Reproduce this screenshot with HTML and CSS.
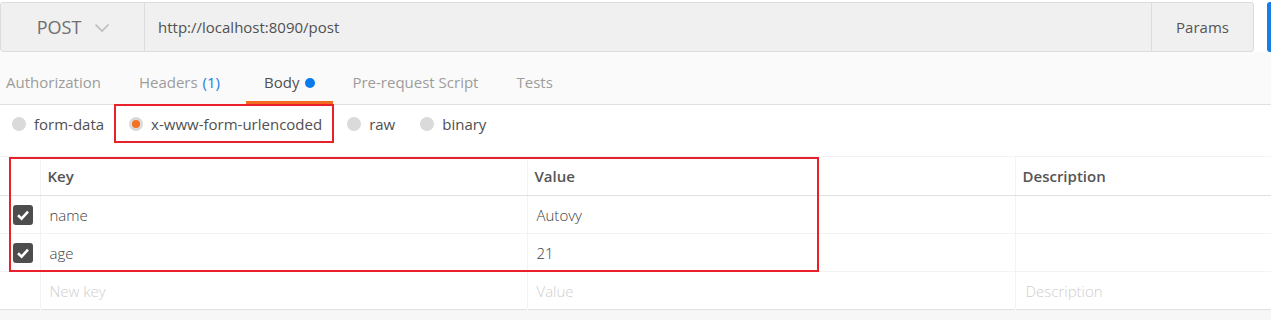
FILE: index.html
```html
<!DOCTYPE html>
<html lang="en">
<head>
    <meta charset="UTF-8">
    <title>POST</title>
    <link rel="stylesheet" href="styles.css">
</head>
<body>
<div class="topbar">
    <div class="request">
        <div class="method">
            <span>POST</span>
            <svg class="chev" width="16" height="10" viewBox="0 0 16 10"><path d="M1.5 1.5 L8 8 L14.5 1.5" fill="none" stroke="#bdbdbd" stroke-width="1.6"/></svg>
        </div>
        <div class="url">http://localhost:8090/post</div>
        <div class="params">Params</div>
    </div>
    <div class="send"></div>
</div>

<div class="tabs">
    <div class="tab first">Authorization</div>
    <div class="tab">Headers <span class="count">(1)</span></div>
    <div class="tab active">Body <span class="dot"></span></div>
    <div class="tab">Pre-request Script</div>
    <div class="tab">Tests</div>
</div>

<div class="bodytypes">
    <label class="opt"><span class="radio"></span>form-data</label>
    <label class="opt marked"><span class="radio on"></span>x-www-form-urlencoded</label>
    <label class="opt"><span class="radio"></span>raw</label>
    <label class="opt"><span class="radio"></span>binary</label>
</div>

<div class="tablewrap">
    <table class="kv" cellspacing="0">
        <colgroup>
            <col style="width: 40px">
            <col style="width: 487px">
            <col style="width: 488px">
            <col>
        </colgroup>
        <tr class="head">
            <td class="chk"></td>
            <td>Key</td>
            <td>Value</td>
            <td>Description</td>
        </tr>
        <tr class="row">
            <td class="chk"><span class="box"><svg width="20" height="20" viewBox="0 0 20 20"><path d="M5 10.2 L8.6 13.6 L15 6.6" fill="none" stroke="#fff" stroke-width="2.6"/></svg></span></td>
            <td>name</td>
            <td>Autovy</td>
            <td></td>
        </tr>
        <tr class="row">
            <td class="chk"><span class="box"><svg width="20" height="20" viewBox="0 0 20 20"><path d="M5 10.2 L8.6 13.6 L15 6.6" fill="none" stroke="#fff" stroke-width="2.6"/></svg></span></td>
            <td>age</td>
            <td>21</td>
            <td></td>
        </tr>
        <tr class="row new">
            <td class="chk"></td>
            <td>New key</td>
            <td>Value</td>
            <td class="descph">Description</td>
        </tr>
    </table>
    <div class="mark"></div>
</div>
<div class="footer"></div>
</body>
</html>
```

FILE: styles.css
```css
body {
    margin: 0;
    font-family: "Open Sans", "Liberation Sans", sans-serif;
    font-size: 15px;
    color: #505050;
    background: #ffffff;
    overflow: hidden;
}

.topbar {
    display: flex;
    padding-top: 2px;
    height: 50px;
}

.request {
    flex-shrink: 0;
    width: 1252px;
    display: flex;
    background: #f0f0f0;
    border: 1px solid #dcdcdc;
    border-radius: 3px;
}

.method {
    width: 144px;
    border-right: 1px solid #dcdcdc;
    display: flex;
    align-items: center;
    justify-content: center;
    gap: 13px;
    font-size: 18px;
    color: #6e6e6e;
    padding-left: 2px;
    box-sizing: border-box;
}

.chev {
    margin-top: 1px;
}

.url {
    flex: 1;
    display: flex;
    align-items: center;
    padding-left: 13px;
    color: #505050;
}

.params {
    width: 101px;
    border-left: 1px solid #dcdcdc;
    display: flex;
    align-items: center;
    justify-content: center;
    color: #555;
}

.send {
    flex-shrink: 0;
    margin-left: 13px;
    width: 20px;
    background: #1a7de6;
    border-radius: 3px;
}

.tabs {
    display: flex;
    height: 52px;
    background: #fafafa;
    border-bottom: 1px solid #e0e0e0;
}

.tab {
    padding: 20px 19px 0;
    display: flex;
    align-items: flex-start;
    line-height: 20px;
    color: #9c9c9c;
}

.tab.first {
    padding-left: 6px;
}

.tab .count {
    color: #1a7ee6;
    margin-left: 5px;
}

.tab.active {
    margin-left: 7px;
    padding-left: 18px;
    padding-right: 18px;
    color: #505050;
    box-shadow: inset 0 -3px 0 #f26b21;
}

.dot {
    width: 10px;
    height: 10px;
    border-radius: 50%;
    background: #097bed;
    margin: 6px 0 0 6px;
}

.bodytypes {
    display: flex;
    align-items: flex-start;
    height: 51px;
    padding: 7px 0 0 12px;
    box-sizing: border-box;
}

.opt {
    display: flex;
    align-items: center;
    line-height: 24px;
    margin-right: 25px;
    color: #505050;
}

.radio {
    width: 14px;
    height: 14px;
    border-radius: 50%;
    background: #dadada;
    margin-right: 8px;
    display: flex;
    align-items: center;
    justify-content: center;
}

.radio.on::after {
    content: "";
    width: 8px;
    height: 8px;
    border-radius: 50%;
    background: #f47023;
}

.marked {
    position: relative;
}

.marked::before {
    content: "";
    position: absolute;
    left: -15px;
    right: -12px;
    top: -8px;
    height: 39px;
    box-sizing: border-box;
    border: 2px solid #e8202a;
}

.tablewrap {
    position: relative;
}

.kv {
    width: 100%;
    border-collapse: collapse;
    table-layout: fixed;
    border-top: 1px solid #e0e0e0;
    border-bottom: 1px solid #e0e0e0;
}

.kv td {
    height: 37px;
    padding: 0 0 0 9px;
    border-left: 1px solid #f3f3f3;
    border-top: 1px solid #f3f3f3;
    color: #505050;
}

.kv .chk {
    border-left: none;
    padding: 0 0 0 13px;
}

.kv .head td {
    height: 38px;
    padding-left: 7px;
    font-weight: 600;
    color: #555;
    border-bottom: 1px solid #e0e0e0;
}

.kv .head .chk {
    padding-left: 13px;
}

.kv .row td {
    font-weight: 300;
    color: #404040;
}

.kv .new td {
    color: #cfcfcf;
}

.kv .new .descph {
    padding-left: 10px;
}

.box {
    display: block;
    width: 20px;
    height: 20px;
    border-radius: 3px;
    background: #4d4d4d;
}

.box svg {
    display: block;
}

.mark {
    position: absolute;
    left: 9px;
    top: 1px;
    width: 810px;
    height: 115px;
    box-sizing: border-box;
    border: 2px solid #e8202a;
}

.footer {
    height: 12px;
    background: #f7f7f7;
}
```
